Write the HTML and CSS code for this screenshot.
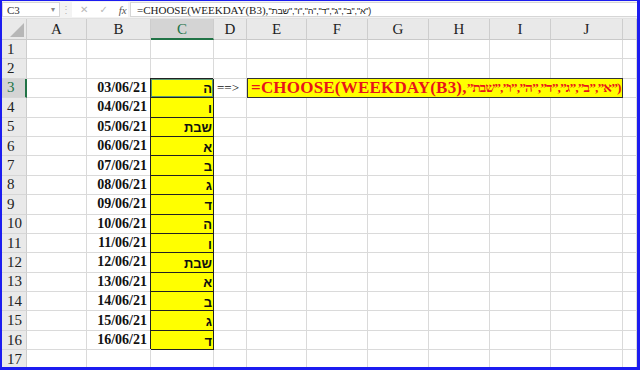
FILE: index.html
```html
<!DOCTYPE html>
<html lang="en">
	<head>
		<meta charset="UTF-8" />
		<title>WEEKDAY</title>
		<link rel="stylesheet" href="styles.css">
	</head>
	<body>
		<div class="frame">
			<div class="fbar">
				<div class="namebox"><span>C3</span><span class="caret">▾</span></div>
				<div class="dots">⋮</div>
				<div class="tools">
					<span>✕</span><span>✓</span><span class="fx">fx</span>
				</div>
				<div class="finput">=CHOOSE(WEEKDAY(B3),<span class="heb">"א","ב","ג","ד","ה","ו","שבת")</span></div>
			</div>

			<div class="sheet">
				<div class="hd corner"><svg width="14" height="14" viewBox="0 0 14 14"><path d="M14 0V14H0Z" fill="#b7b7b7"/></svg></div>
				<div class="hd">A</div><div class="hd">B</div><div class="hd sel">C</div><div class="hd">D</div><div class="hd">E</div><div class="hd">F</div><div class="hd">G</div><div class="hd">H</div><div class="hd">I</div><div class="hd">J</div><div class="hd"></div>

				<div class="rh">1</div><div class="c"></div><div class="c"></div><div class="c"></div><div class="c"></div><div class="c"></div><div class="c"></div><div class="c"></div><div class="c"></div><div class="c"></div><div class="c"></div><div class="c"></div>
				<div class="rh">2</div><div class="c"></div><div class="c"></div><div class="c"></div><div class="c"></div><div class="c"></div><div class="c"></div><div class="c"></div><div class="c"></div><div class="c"></div><div class="c"></div><div class="c"></div>

				<div class="rh sel">3</div><div class="c"></div><div class="c date">03/06/21</div><div class="c day active">ה</div><div class="c arrow">==&gt;</div>
				<div class="c formula">=CHOOSE(WEEKDAY(B3),<span class="heb">”א”,”ב”,”ג”,”ד”,”ה”,”ו”,”שבת”)</span></div><div class="c"></div>

				<div class="rh">4</div><div class="c"></div><div class="c date">04/06/21</div><div class="c day">ו</div><div class="c"></div><div class="c"></div><div class="c"></div><div class="c"></div><div class="c"></div><div class="c"></div><div class="c"></div><div class="c"></div>
				<div class="rh">5</div><div class="c"></div><div class="c date">05/06/21</div><div class="c day">שבת</div><div class="c"></div><div class="c"></div><div class="c"></div><div class="c"></div><div class="c"></div><div class="c"></div><div class="c"></div><div class="c"></div>
				<div class="rh">6</div><div class="c"></div><div class="c date">06/06/21</div><div class="c day">א</div><div class="c"></div><div class="c"></div><div class="c"></div><div class="c"></div><div class="c"></div><div class="c"></div><div class="c"></div><div class="c"></div>
				<div class="rh">7</div><div class="c"></div><div class="c date">07/06/21</div><div class="c day">ב</div><div class="c"></div><div class="c"></div><div class="c"></div><div class="c"></div><div class="c"></div><div class="c"></div><div class="c"></div><div class="c"></div>
				<div class="rh">8</div><div class="c"></div><div class="c date">08/06/21</div><div class="c day">ג</div><div class="c"></div><div class="c"></div><div class="c"></div><div class="c"></div><div class="c"></div><div class="c"></div><div class="c"></div><div class="c"></div>
				<div class="rh">9</div><div class="c"></div><div class="c date">09/06/21</div><div class="c day">ד</div><div class="c"></div><div class="c"></div><div class="c"></div><div class="c"></div><div class="c"></div><div class="c"></div><div class="c"></div><div class="c"></div>
				<div class="rh">10</div><div class="c"></div><div class="c date">10/06/21</div><div class="c day">ה</div><div class="c"></div><div class="c"></div><div class="c"></div><div class="c"></div><div class="c"></div><div class="c"></div><div class="c"></div><div class="c"></div>
				<div class="rh">11</div><div class="c"></div><div class="c date">11/06/21</div><div class="c day">ו</div><div class="c"></div><div class="c"></div><div class="c"></div><div class="c"></div><div class="c"></div><div class="c"></div><div class="c"></div><div class="c"></div>
				<div class="rh">12</div><div class="c"></div><div class="c date">12/06/21</div><div class="c day">שבת</div><div class="c"></div><div class="c"></div><div class="c"></div><div class="c"></div><div class="c"></div><div class="c"></div><div class="c"></div><div class="c"></div>
				<div class="rh">13</div><div class="c"></div><div class="c date">13/06/21</div><div class="c day">א</div><div class="c"></div><div class="c"></div><div class="c"></div><div class="c"></div><div class="c"></div><div class="c"></div><div class="c"></div><div class="c"></div>
				<div class="rh">14</div><div class="c"></div><div class="c date">14/06/21</div><div class="c day">ב</div><div class="c"></div><div class="c"></div><div class="c"></div><div class="c"></div><div class="c"></div><div class="c"></div><div class="c"></div><div class="c"></div>
				<div class="rh">15</div><div class="c"></div><div class="c date">15/06/21</div><div class="c day">ג</div><div class="c"></div><div class="c"></div><div class="c"></div><div class="c"></div><div class="c"></div><div class="c"></div><div class="c"></div><div class="c"></div>
				<div class="rh">16</div><div class="c"></div><div class="c date">16/06/21</div><div class="c day">ד</div><div class="c"></div><div class="c"></div><div class="c"></div><div class="c"></div><div class="c"></div><div class="c"></div><div class="c"></div><div class="c"></div>
				<div class="rh">17</div><div class="c"></div><div class="c"></div><div class="c"></div><div class="c"></div><div class="c"></div><div class="c"></div><div class="c"></div><div class="c"></div><div class="c"></div><div class="c"></div><div class="c"></div>
			</div>
		</div>
	</body>
</html>
```

FILE: styles.css
```css
* {
	padding: 0;
	margin: 0;
	box-sizing: border-box;
}
body {
	width: 640px;
	height: 370px;
	overflow: hidden;
	background: #fff;
	font-family: "Liberation Serif", serif;
}
.frame {
	width: 640px;
	height: 370px;
	border: 2px solid #1c1cf0;
	border-top-width: 1px;
	border-right-width: 3px;
	border-bottom-width: 3px;
	overflow: hidden;
	background: #fff;
}
.fbar {
	display: flex;
	align-items: stretch;
	height: 18px;
	background: #f3f3f3;
	border-bottom: 1px solid #e2e2e2;
	font-size: 11px;
	color: #333;
}
.namebox {
	display: flex;
	justify-content: space-between;
	align-items: center;
	width: 58px;
	padding: 0 4px 0 4px;
	margin: 1px 0 1px 0;
	background: #fff;
	border: 1px solid #d6d6d6;
}
.caret {
	font-size: 8px;
	color: #888;
	font-family: "DejaVu Sans", sans-serif;
}
.dots {
	width: 12px;
	text-align: center;
	color: #b5b5b5;
	font-size: 10px;
	line-height: 17px;
}
.tools {
	display: flex;
	align-items: center;
	gap: 11px;
	width: 56px;
	padding-left: 8px;
	margin: 1px 0;
	background: #fff;
	color: #b8b8b8;
	font-family: "DejaVu Sans", sans-serif;
	font-size: 10px;
}
.tools .fx {
	font-family: "Liberation Serif", serif;
	font-style: italic;
	color: #555;
	font-size: 11px;
}
.finput {
	flex: 1;
	margin: 1px 0 1px 2px;
	padding-left: 6px;
	background: #fff;
	border: 1px solid #d6d6d6;
	border-right: none;
	line-height: 15px;
	font-size: 11px;
	color: #222;
	white-space: nowrap;
}
.finput .heb {
	font-family: "Liberation Sans", sans-serif;
	font-size: 9px;
	letter-spacing: -0.2px;
}
.sheet {
	display: grid;
	grid-template-columns: 25px 60px 64px 63px 33px 60px 61px 61px 61px 61px 72px 14px;
	grid-template-rows: 21px repeat(17, 19.4px);
	font-size: 15px;
	color: #222;
}
.hd {
	display: flex;
	align-items: center;
	justify-content: center;
	background: #e9e9e9;
	border-right: 1px solid #cdcdcd;
	border-bottom: 1px solid #c9c9c9;
	padding-top: 1px;
}
.hd.corner {
	justify-content: flex-end;
	align-items: flex-end;
	padding: 0 2px 2px 0;
}
.hd.sel {
	background: #d4d4d4;
	color: #217346;
	border-bottom: 2px solid #217346;
}
.rh {
	display: flex;
	align-items: center;
	padding-left: 5px;
	background: #e9e9e9;
	border-right: 1px solid #cdcdcd;
	border-bottom: 1px solid #d6d6d6;
}
.rh.sel {
	background: #d4d4d4;
	color: #217346;
	border-right: 2px solid #217346;
}
.c {
	display: flex;
	align-items: center;
	justify-content: flex-end;
	padding: 0 3px;
	border-right: 1px solid #dadada;
	border-bottom: 1px solid #dadada;
	white-space: nowrap;
	overflow: hidden;
}
.date {
	font-weight: bold;
	font-size: 14px;
	color: #111;
}
.day {
	background: #ffff00;
	border-right: 1px solid #222;
	border-bottom: 1px solid #222;
	box-shadow: -1px -1px 0 #222;
	font-family: "Liberation Sans", "DejaVu Sans", sans-serif;
	font-weight: bold;
	font-size: 13px;
	color: #111;
	padding: 2px 1px 0 0;
}
.day.active {
	box-shadow: -1px -1px 0 #222, inset 1px 1px 0 #5a9a70, inset -1px -1px 0 #5a9a70;
}
.arrow {
	justify-content: flex-start;
	padding-left: 3px;
	font-size: 13px;
	color: #111;
}
.formula {
	grid-column: span 6;
	justify-content: flex-start;
	padding-left: 3px;
	background: #ffff00;
	border: 1px solid #333;
	border-top: none;
	box-shadow: 0 -1px 0 #333;
	color: #e8141a;
	font-weight: bold;
	font-size: 17px;
	letter-spacing: 0.2px;
}
.formula .heb {
	font-size: 13.5px;
	letter-spacing: -0.9px;
}
```
